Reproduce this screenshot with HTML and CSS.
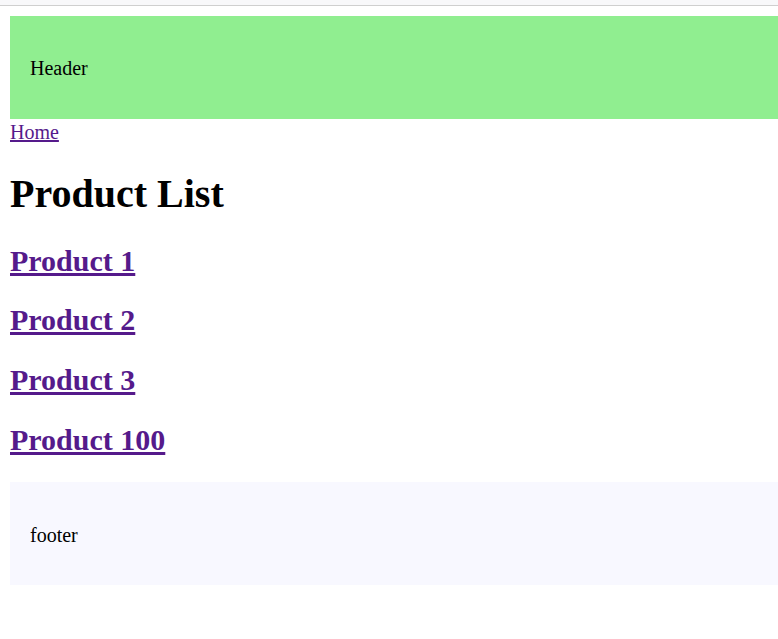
FILE: index.html
```html
<!DOCTYPE html>
<html>
<head>
<meta charset="utf-8">
<link rel="stylesheet" href="styles.css">
</head>
<body>
<div class="topbar"></div>
<div class="page">
  <header class="header"><p class="box-text">Header</p></header>
  <nav class="nav"><a class="link" href="#">Home</a></nav>
  <main class="main">
    <h1 class="title">Product List</h1>
    <h2 class="product"><a class="link" href="#">Product 1</a></h2>
    <h2 class="product"><a class="link" href="#">Product 2</a></h2>
    <h2 class="product"><a class="link" href="#">Product 3</a></h2>
    <h2 class="product"><a class="link" href="#">Product 100</a></h2>
  </main>
  <footer class="footer"><p class="box-text">footer</p></footer>
</div>
</body>
</html>
```
FILE: styles.css
```css
html, body {
  margin: 0;
  padding: 0;
  background: #ffffff;
}
body {
  font-family: "Liberation Serif", "Times New Roman", serif;
  font-size: 20px;
  color: #000000;
}
.topbar {
  height: 5px;
  background: #f8f8fa;
  border-bottom: 1px solid #cfcfcf;
}
.page {
  padding: 10px 0 10px 10px;
}
.header {
  background: #90ee90;
  padding: 21px 20px 19px;
  display: flow-root;
}
.footer {
  background: #f8f8ff;
  padding: 22px 20px 18px;
  display: flow-root;
}
.box-text {
  margin: 20px 0;
  line-height: 23px;
}
.nav {
  padding-top: 1px;
  line-height: 24px;
}
.link {
  color: #551a8b;
}
.title {
  font-size: 40px;
  font-weight: bold;
  margin: 26.8px 0;
  line-height: 46px;
}
.product {
  font-size: 30px;
  font-weight: bold;
  margin: 24.9px 0;
  line-height: 34.8px;
}
```
